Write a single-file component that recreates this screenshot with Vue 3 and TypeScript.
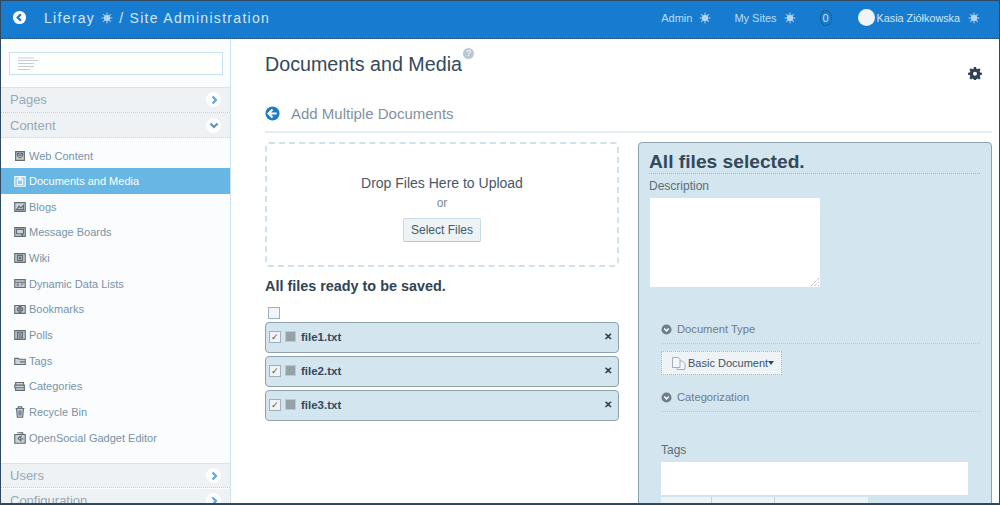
<script setup lang="ts">
interface NavItem {
  label: string
  icon: string
  active?: boolean
}

const navItems: NavItem[] = [
  { label: 'Web Content', icon: 'M3 3h10v10H3z M5 5h2v3H5z M9 5h2v3H9z M6 10h4' },
  { label: 'Documents and Media', icon: 'M2 3h12v11H2z M5 6h6v6H5z M7 4h2v3H7z', active: true },
  { label: 'Blogs', icon: 'M2 3h12v10H2z M4 11l3-4 2 2 3-3v5z' },
  { label: 'Message Boards', icon: 'M2 3h12v10H2z M4 5h8v5H4z M9 10l2 2v-2z' },
  { label: 'Wiki', icon: 'M2 3h12v10H2z M5 5h6v6H5z M7 7h2v2H7z' },
  { label: 'Dynamic Data Lists', icon: 'M2 3h12v9H2z M2 6h12 M4 8h3 M4 10h3 M9 8h3 M9 10h1' },
  { label: 'Bookmarks', icon: 'M2 4h12v9H2z M5 7h6v3H5z M7 5h2v7H7z' },
  { label: 'Polls', icon: 'M2 3h12v10H2z M5 5h2v8H5z M9 5h2v6H9z' },
  { label: 'Tags', icon: 'M2 5h4l1 1h7v6H2z M8 9h5' },
  { label: 'Categories', icon: 'M3 4h9v3H3z M2 7h11v3H2z M3 10h10v3H3z' },
  { label: 'Recycle Bin', icon: 'M3 4h10 M6 4V2h4v2 M4 4l1 10h6l1-10 M7 6v6 M9 6v6' },
  { label: 'OpenSocial Gadget Editor', icon: 'M2 4h12v10H2z M5 2h6v2 M6 8l3-2v5l-3-2z M10 9h2' }
]

const files = ['file1.txt', 'file2.txt', 'file3.txt']
const rays = [0, 45, 90, 135]
</script>

<template>
  <div class="frame">
    <header class="topbar">
      <div class="top-left">
        <svg class="back" viewBox="0 0 16 16">
          <circle cx="8" cy="8" r="7" fill="#fff" />
          <path d="M9.5 4.5 6 8l3.5 3.5" fill="none" stroke="#177ccf" stroke-width="2.4" />
        </svg>
        <span class="crumb">Liferay</span>
        <svg class="spark spark-big" viewBox="0 0 12 12">
          <circle cx="6" cy="6" r="3" fill="#cfe4f5" />
          <g stroke="#a9d0ee" stroke-width="1">
            <path v-for="r in rays" :key="r" d="M6 .5v11" :transform="`rotate(${r} 6 6)`" />
          </g>
        </svg>
        <span class="crumb">/ Site Administration</span>
      </div>
      <nav class="top-right">
        <span class="top-link">Admin
          <svg class="spark" viewBox="0 0 12 12">
            <circle cx="6" cy="6" r="3" fill="#dcecf8" />
            <g stroke="#a9d0ee" stroke-width="1">
              <path v-for="r in rays" :key="r" d="M6 .5v11" :transform="`rotate(${r} 6 6)`" />
            </g>
          </svg>
        </span>
        <span class="top-link">My Sites
          <svg class="spark" viewBox="0 0 12 12">
            <circle cx="6" cy="6" r="3" fill="#dcecf8" />
            <g stroke="#a9d0ee" stroke-width="1">
              <path v-for="r in rays" :key="r" d="M6 .5v11" :transform="`rotate(${r} 6 6)`" />
            </g>
          </svg>
        </span>
        <span class="count">0</span>
        <span class="user">
          <span class="avatar"></span>
          <span>Kasia Ziółkowska</span>
          <svg class="spark" viewBox="0 0 12 12">
            <circle cx="6" cy="6" r="3" fill="#dcecf8" />
            <g stroke="#a9d0ee" stroke-width="1">
              <path v-for="r in rays" :key="r" d="M6 .5v11" :transform="`rotate(${r} 6 6)`" />
            </g>
          </svg>
        </span>
      </nav>
    </header>

    <div class="body">
      <aside class="sidebar">
        <div class="search-wrap">
          <div class="search">
            <svg width="24" height="14" viewBox="0 0 24 14">
              <path d="M2 1h16M2 3.500h20M2 6.500h16M2 9.500h16M2 12.500h12" stroke="#c3ccd3" fill="none" />
            </svg>
          </div>
        </div>
        <div class="section">
          <span>Pages</span>
          <span class="chev"><svg viewBox="0 0 12 12"><path d="M4.500 2.500 8 6l-3.500 3.500" fill="none" stroke="#5fa8d8" stroke-width="2.200" /></svg></span>
        </div>
        <div class="section">
          <span>Content</span>
          <span class="chev"><svg viewBox="0 0 12 12"><path d="M2.500 4.500 6 8l3.500-3.500" fill="none" stroke="#5b93b8" stroke-width="2.200" /></svg></span>
        </div>
        <ul class="nav">
          <li v-for="item in navItems" :key="item.label" :class="{ active: item.active }">
            <svg class="nav-icon" viewBox="0 0 16 16">
              <path :d="item.icon" fill="currentColor" fill-opacity=".3" stroke="currentColor" stroke-width="1.300" />
            </svg>
            <span>{{ item.label }}</span>
          </li>
        </ul>
        <div class="section users">
          <span>Users</span>
          <span class="chev"><svg viewBox="0 0 12 12"><path d="M4.500 2.500 8 6l-3.500 3.500" fill="none" stroke="#5fa8d8" stroke-width="2.200" /></svg></span>
        </div>
        <div class="section">
          <span>Configuration</span>
          <span class="chev"><svg viewBox="0 0 12 12"><path d="M4.500 2.500 8 6l-3.500 3.500" fill="none" stroke="#5fa8d8" stroke-width="2.200" /></svg></span>
        </div>
      </aside>

      <main class="main">
        <div class="title-row">
          <h1>Documents and Media</h1>
          <span class="help">?</span>
          <svg class="gear" viewBox="0 0 16 16">
            <path d="M6.800 1h2.400l.4 2 1.300.6 1.800-1.100 1.700 1.700-1.100 1.800.6 1.300 2 .4v2.400l-2 .4-.6 1.300 1.100 1.800-1.700 1.700-1.800-1.100-1.300.6-.4 2H6.800l-.4-2-1.300-.6-1.800 1.100-1.700-1.700 1.100-1.800-.6-1.300-2-.4V7.700l2-.4.6-1.300-1.100-1.800 1.700-1.700 1.800 1.100 1.300-.6z" fill="#2e4253" />
            <circle cx="8" cy="8.900" r="2.300" fill="#fff" />
          </svg>
        </div>

        <div class="sub-head">
          <svg class="sub-back" viewBox="0 0 16 16">
            <circle cx="8" cy="8" r="7.500" fill="#1a7ccb" />
            <path d="M8 3.800 3.800 8 8 12.200M4 8h8.500" fill="none" stroke="#fff" stroke-width="2.200" />
          </svg>
          <span>Add Multiple Documents</span>
        </div>

        <div class="columns">
          <section class="left">
            <div class="drop">
              <p class="drop-title">Drop Files Here to Upload</p>
              <p class="drop-or">or</p>
              <button class="btn">Select Files</button>
            </div>
            <h3>All files ready to be saved.</h3>
            <div class="check-all"><span class="box"></span></div>
            <div class="files">
              <div v-for="f in files" :key="f" class="file">
                <span class="box checked">✓</span>
                <span class="file-icon"></span>
                <span class="file-name">{{ f }}</span>
                <span class="close">✕</span>
              </div>
            </div>
          </section>

          <section class="panel">
            <h2>All files selected.</h2>
            <label class="field-label">Description</label>
            <div class="textarea">
              <svg class="grip" width="10" height="10" viewBox="0 0 10 10">
                <path d="M1 9 9 1M4.500 9 9 4.500M8 9l1-1" stroke="#8a9aa5" stroke-dasharray="1 1" />
              </svg>
            </div>
            <div class="toggle toggle-doc">
              <svg viewBox="0 0 12 12">
                <circle cx="6" cy="6" r="5.500" fill="#6f7f89" />
                <path d="M3.500 5 6 7.500 8.500 5" fill="none" stroke="#fff" stroke-width="1.600" />
              </svg>
              <span>Document Type</span>
            </div>
            <button class="type-btn">
              <svg width="16" height="15" viewBox="0 0 16 15">
                <path d="M1.500 1.500h6l1.500 2v8h-7.500z M9 5h2.500l2.500 2.500v6H6v-2" fill="#f4f7f9" stroke="#9fb0bb" />
              </svg>
              <span>Basic Document</span><i class="caret"></i>
            </button>
            <div class="toggle toggle-cat">
              <svg viewBox="0 0 12 12">
                <circle cx="6" cy="6" r="5.500" fill="#6f7f89" />
                <path d="M3.500 5 6 7.500 8.500 5" fill="none" stroke="#fff" stroke-width="1.600" />
              </svg>
              <span>Categorization</span>
            </div>
            <label class="field-label tags-label">Tags</label>
            <div class="tags-input"></div>
            <div class="tags-tabs">
              <span class="tab-a"></span><span class="tab-b"></span><span class="tab-c"></span>
            </div>
          </section>
        </div>
      </main>
    </div>
  </div>
</template>

<style scoped>
.frame {
  width: 1000px;
  height: 505px;
  box-sizing: border-box;
  border-top: 1px solid #2f4a60;
  border-left: 1px solid #2f4a60;
  border-right: 1px solid #2f4a60;
  border-bottom: 2px solid #2f4a60;
  overflow: hidden;
  background: #fff;
  font-family: "Liberation Sans", Arial, sans-serif;
  display: flex;
  flex-direction: column;
}

.topbar {
  flex: 0 0 38px;
  box-sizing: border-box;
  padding-bottom: 4px;
  background: #177ccf;
  color: #d3e6f6;
  display: flex;
  align-items: center;
  justify-content: space-between;
  border-bottom: 1px dotted #1b4f7c;
}

.top-left {
  display: flex;
  align-items: center;
  padding-left: 11px;
}

.back {
  width: 15px;
  height: 15px;
  margin-right: 17px;
}

.crumb {
  font-size: 14px;
  letter-spacing: 1.300px;
}

.spark {
  width: 12px;
  height: 12px;
}

.spark-big {
  margin: 0 6px;
}

.top-right {
  display: flex;
  align-items: center;
  font-size: 11px;
  color: #bcdcf5;
  padding-right: 19px;
}

.top-link {
  display: flex;
  align-items: center;
  gap: 7px;
  margin-right: 23px;
}

.count {
  width: 12px;
  height: 16px;
  line-height: 14px;
  box-sizing: border-box;
  border: 1px dotted #1a3e5c;
  border-radius: 50%;
  text-align: center;
  margin-right: 26px;
  margin-left: 1px;
  color: #cfe4f5;
}

.user {
  display: flex;
  align-items: center;
  color: #d3e6f6;
  font-size: 10.800px;
}

.avatar {
  width: 17px;
  height: 17px;
  border-radius: 50%;
  background: #eef4f9;
  margin-right: 2px;
}

.user .spark {
  margin-left: 8px;
}

.body {
  flex: 1;
  display: flex;
  min-height: 0;
}

.sidebar {
  flex: 0 0 229px;
  border-right: 1px solid #cfe2ef;
  background: #fbfcfd;
  display: flex;
  flex-direction: column;
}

.search-wrap {
  padding: 13px 7px 11.500px 8px;
  border-bottom: 1px solid #d3e5f0;
}

.search {
  height: 23px;
  box-sizing: border-box;
  background: #fff;
  border: 1px solid #c8dfee;
  padding: 3px 6px;
  display: flex;
  align-items: center;
}

.section {
  flex: 0 0 25px;
  height: 25px;
  box-sizing: border-box;
  background: #eef2f4;
  border-bottom: 1px dotted #c3d5e0;
  color: #95a9b6;
  font-size: 13px;
  padding: 0 9px;
  display: flex;
  align-items: center;
  justify-content: space-between;
  margin-bottom: .6px;
}

.chev {
  width: 15px;
  height: 15px;
  border-radius: 50%;
  background: #fff;
  display: flex;
  align-items: center;
  justify-content: center;
}

.chev svg {
  width: 12px;
  height: 12px;
}

.nav {
  list-style: none;
  margin: 4px 0 0;
  padding: 0;
  flex: 0 0 auto;
  height: 320.500px;
  box-sizing: border-box;
}

.nav li {
  height: 25.67px;
  display: flex;
  align-items: center;
  padding-left: 12px;
  font-size: 11px;
  color: #7793a8;
}

.nav li.active {
  background: #68b6e3;
  color: #fff;
}

.nav-icon {
  width: 14px;
  height: 14px;
  margin-right: 2px;
  color: #5f6d77;
  flex: none;
}

.nav li.active .nav-icon {
  color: #f2f7fb;
}

.users {
  border-top: 1px solid #d3e5f0;
}

.main {
  flex: 1;
  min-width: 0;
  padding: 0 7px 0 34px;
}

.title-row {
  position: relative;
  height: 56px;
  padding-top: 14px;
  box-sizing: border-box;
}

h1 {
  margin: 0;
  font-size: 19.700px;
  line-height: 23px;
  font-weight: normal;
  color: #33495a;
}

.help {
  position: absolute;
  left: 198px;
  top: 9px;
  width: 11px;
  height: 11px;
  border-radius: 50%;
  background: #b9c7d0;
  color: #fff;
  font-size: 9px;
  line-height: 11px;
  text-align: center;
}

.gear {
  position: absolute;
  right: 10px;
  top: 27px;
  width: 14px;
  height: 14px;
}

.sub-head {
  display: flex;
  align-items: center;
  gap: 11px;
  height: 35px;
  padding-bottom: 2px;
  box-sizing: border-box;
  border-bottom: 2px solid #e4edf2;
  color: #7f929f;
  font-size: 15px;
  margin-top: 3px;
}

.sub-back {
  width: 15px;
  height: 15px;
}

.columns {
  display: flex;
  gap: 19px;
  margin-top: 9px;
}

.left {
  flex: 0 0 354px;
}

.drop {
  height: 125px;
  box-sizing: border-box;
  border: 2px dashed #cfe2ec;
  border-radius: 4px;
  text-align: center;
  padding-top: 31px;
}

.drop-title {
  margin: 0;
  font-size: 14px;
  line-height: 17px;
  color: #44596a;
}

.drop-or {
  margin: 4px 0 8px;
  font-size: 12px;
  line-height: 14px;
  color: #7a8b97;
}

.btn {
  width: 78px;
  height: 24px;
  padding: 0;
  background: #eef3f6;
  border: 1px solid #c5dbe7;
  border-bottom-color: #a9c8da;
  border-radius: 2px;
  font: 12px "Liberation Sans", Arial, sans-serif;
  color: #44596a;
}

h3 {
  margin: 10px 0 0;
  font-size: 14.400px;
  line-height: 18px;
  color: #2f4454;
}

.check-all {
  height: 14px;
  margin-top: 11px;
  padding-left: 3px;
  margin-bottom: 2px;
  display: flex;
  align-items: center;
}

.box {
  width: 10px;
  height: 10px;
  border: 1px solid #9fb0bb;
  background: #f1f5f7;
  display: inline-block;
  font-size: 9px;
  line-height: 10px;
  text-align: center;
  color: #44535e;
}

.box.checked {
  background: #eef3f6;
}

.files {
  display: flex;
  flex-direction: column;
  gap: 3px;
}

.file {
  height: 31px;
  box-sizing: border-box;
  background: #d3e5ef;
  border: 1px solid #8ea2ae;
  border-radius: 4px;
  display: flex;
  align-items: center;
  padding: 0 6px 2px 3px;
  font-size: 11.500px;
}

.file-icon {
  width: 9px;
  height: 9px;
  margin-left: 4px;
  background: #96a2aa;
  border: 1px solid #bcc8cf;
}

.file-name {
  margin-left: 5px;
  font-weight: bold;
  color: #33495a;
  flex: 1;
}

.close {
  font-size: 10px;
  font-weight: bold;
  color: #26394a;
}

.panel {
  flex: 0 0 354px;
  height: 400px;
  box-sizing: border-box;
  background: #d3e5ef;
  border: 1px solid #8ea2ae;
  border-radius: 4px;
  padding: 8px 11px 0 10px;
  color: #5b6d79;
}

h2 {
  margin: 0;
  font-size: 19.200px;
  line-height: 22px;
  color: #33495a;
  border-bottom: 1px dotted #a8bcc8;
}

.field-label {
  display: block;
  font-size: 12px;
  line-height: 14px;
  margin-top: 5px;
}

.textarea {
  position: relative;
  width: 170px;
  height: 89px;
  margin: 5px 0 0 1px;
  background: #fff;
}

.grip {
  position: absolute;
  right: 0;
  bottom: 0;
}

.toggle {
  display: flex;
  align-items: center;
  gap: 5px;
  margin-left: 12px;
  padding-bottom: 7px;
  font-size: 11.200px;
  line-height: 14px;
  color: #6c7d89;
  border-bottom: 1px dotted #b6cad6;
}

.toggle svg {
  width: 11px;
  height: 11px;
}

.toggle-doc {
  margin-top: 35px;
}

.toggle-cat {
  margin-top: 15px;
}

.type-btn {
  display: flex;
  align-items: center;
  width: 121px;
  height: 24px;
  margin: 7px 0 0 12px;
  padding: 0 0 0 9px;
  background: #eef3f6;
  border: 1px dotted #a8b8c2;
  font: 11px "Liberation Sans", Arial, sans-serif;
  color: #3e5263;
}

.type-btn svg {
  flex: none;
  margin-right: 1px;
}

.caret {
  width: 0;
  height: 0;
  border-left: 3.500px solid transparent;
  border-right: 3.500px solid transparent;
  border-top: 4px solid #33495a;
}

.tags-label {
  margin: 31px 0 0 12px;
}

.tags-input {
  width: 307px;
  height: 33px;
  margin: 5px 0 0 12px;
  background: #fff;
}

.tags-tabs {
  display: flex;
  width: 207px;
  height: 20px;
  margin: 2px 0 0 12px;
  background: #eef3f6;
}

.tab-a {
  width: 50px;
  border-right: 1px solid #c5d3dc;
}

.tab-b {
  width: 62px;
  border-right: 1px solid #c5d3dc;
}
</style>

<style>
html, body {
  margin: 0;
  overflow: hidden;
}
</style>
